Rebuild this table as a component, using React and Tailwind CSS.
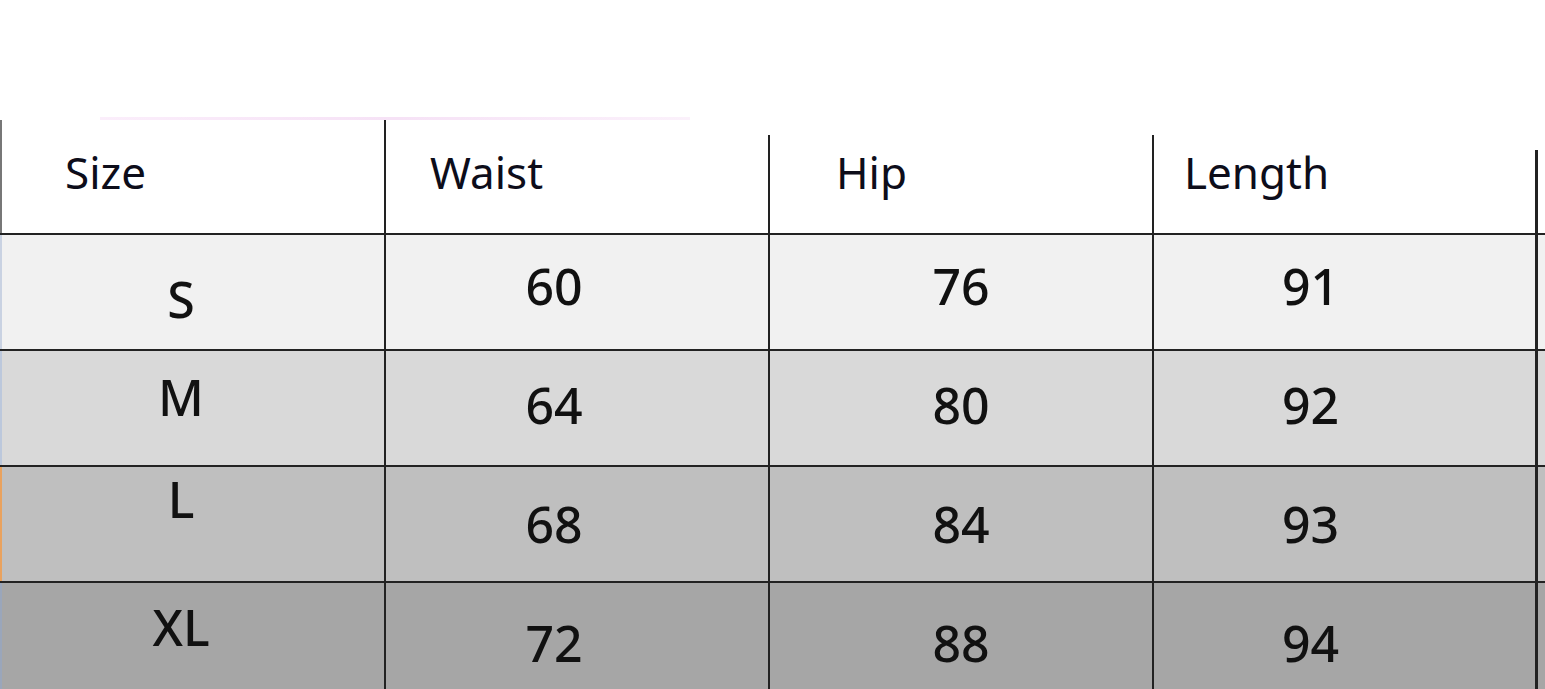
const rows = [
  { size: "S", vals: ["60", "76", "91"], bg: "bg-[#f1f1f1]", edge: "border-l-[#c9d2e2]", pt: ["pt-[39px]", "pt-[26px]"] },
  { size: "M", vals: ["64", "80", "92"], bg: "bg-[#d9d9d9]", edge: "border-l-[#bcc8dc]", pt: ["pt-[21px]", "pt-[29px]"] },
  { size: "L", vals: ["68", "84", "93"], bg: "bg-[#bfbfbf]", edge: "border-l-[#e9a25e]", pt: ["pt-[7px]", "pt-[32px]"] },
  { size: "XL", vals: ["72", "88", "94"], bg: "bg-[#a6a6a6]", edge: "border-l-[#9aa6bb]", pt: ["pt-[19px]", "pt-[35px]"] },
];

const shift = ["pr-[46px]", "", "pr-[68px]"];

export default function App() {
  return (
    <div className="w-[1545px] h-[689px] overflow-hidden bg-white text-[#111] font-['Noto_Sans','Open_Sans',sans-serif]">
      <div className="h-[120px] relative">
        <div className="absolute left-[100px] bottom-0 w-[590px] h-[3px] bg-gradient-to-r from-[#fbeefb] via-[#f6e2f6] to-[#fbf1fb]" />
      </div>

      {/* header */}
      <div className="flex h-[113px] bg-white text-[44px] leading-none text-[#0d0d1a]">
        <div className="w-[384px] pl-[63px] pt-[30px] border-l-2 border-l-[#777]">Size</div>
        <div className="w-[384px] pl-[44px] pt-[30px] border-l-2 border-l-[#222]">Waist</div>
        <div className="w-[384px] flex">
          <div className="w-[2px] mt-[15px] bg-[#222]" />
          <div className="pl-[66px] pt-[30px]">Hip</div>
        </div>
        <div className="w-[383px] flex">
          <div className="w-[2px] mt-[15px] bg-[#222]" />
          <div className="pl-[30px] pt-[30px]">Length</div>
        </div>
        <div className="flex-1 flex">
          <div className="w-[3px] mt-[30px] bg-[#222]" />
        </div>
      </div>

      {rows.map((r) => (
        <div
          key={r.size}
          className={`flex h-[116px] border-t-2 border-t-[#222] text-[50px] font-medium leading-none ${r.bg}`}
        >
          <div className={`w-[384px] border-l-2 ${r.edge} text-center pr-[24px] ${r.pt[0]}`}>{r.size}</div>
          {r.vals.map((v, j) => (
            <div
              key={v}
              className={`${j === 2 ? "w-[383px]" : "w-[384px]"} border-l-2 border-l-[#222] text-center ${shift[j]} ${r.pt[1]}`}
            >
              {v}
            </div>
          ))}
          <div className="flex-1 border-l-[3px] border-l-[#222]" />
        </div>
      ))}
    </div>
  );
}
